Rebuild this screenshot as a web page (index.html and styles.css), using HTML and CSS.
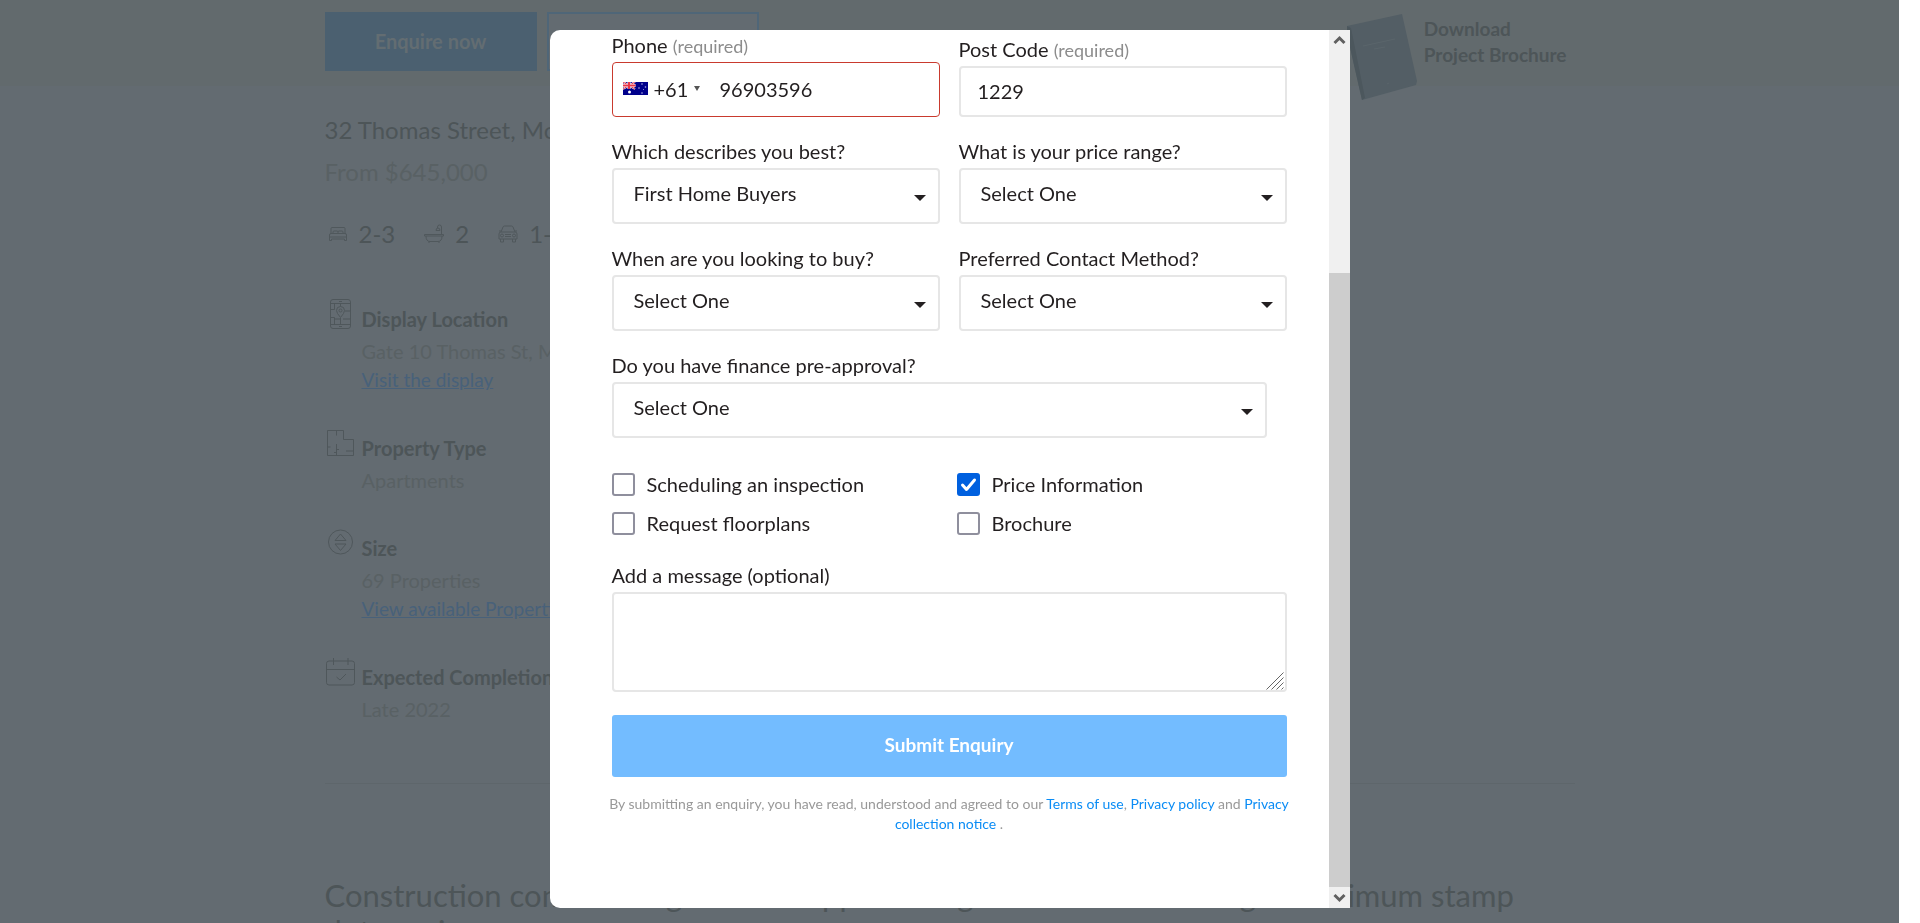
FILE: index.html
```html
<!DOCTYPE html>
<html lang="en">
<head>
<meta charset="utf-8">
<meta name="viewport" content="width=device-width, initial-scale=1">
<title>Project enquiry</title>
<link rel="stylesheet" href="styles.css">
</head>
<body>
<div class="page">
  <header class="topbar">
    <div class="container topbar-inner">
      <button class="btn btn-solid" type="button">Enquire now</button>
      <button class="btn btn-outline" type="button" aria-label="Call"></button>
      <a class="brochure" href="#brochure">
        <svg class="brochure-cover" viewBox="0 0 70 88" aria-hidden="true">
          <path d="M0 12 55 0 70 67 69 71 15 86 0 20Z" fill="#535e65"/>
          <path d="M0 12 4 14 18 84 15 86 0 20Z" fill="#4c575d"/>
          <path d="M16 32 48 25M27 35 38 33M40 70l2-1" stroke="#5a656b" fill="none"/>
        </svg>
        <span>Download<br>Project Brochure</span>
      </a>
    </div>
  </header>
  <main class="container">
    <p class="address">32 Thomas Street, Moonee Ponds</p>
    <p class="price">From $645,000</p>
    <ul class="stats">
      <li>
        <svg class="stat-icon" viewBox="0 0 20 20" aria-hidden="true"><path d="M3 10V4.500q0-1 1-1h12q1 0 1 1V10M1.500 16.500V11q0-1.500 1.500-1.500h14q1.500 0 1.500 1.500v5.500h-2V15h-13v1.500zM1.500 13h17M5 9.500V8q0-1 1-1h3q1 0 1 1v1.500M10 8q0-1 1-1h3q1 0 1 1v1.500"/></svg>
        <span>2-3</span>
      </li>
      <li>
        <svg class="stat-icon" viewBox="0 0 20 20" aria-hidden="true"><path d="M.5 10.500h19v1.500h-19zM2 12q0 5.500 4 5.500h8q4 0 4-5.500M5 17.500V19M15 17.500V19M17.500 10.500V3q0-2-2-2t-2 2v1M12 6.500q0-2.500 2-2.500t2 2.500z"/></svg>
        <span>2</span>
      </li>
      <li>
        <svg class="stat-icon" viewBox="0 0 20 20" aria-hidden="true"><path d="M3 8l2-5q.5-1 1.500-1h7q1 0 1.500 1l2 5M1 10q0-2 2-2h14q2 0 2 2v5H1zM1 7h2M17 7h2M2.500 15v3h3v-3M14.500 15v3h3v-3M7 10.500h6M7 12.500h6"/><circle cx="4" cy="11.500" r="1.500"/><circle cx="16" cy="11.500" r="1.500"/></svg>
        <span>1-2</span>
      </li>
    </ul>
    <dl class="facts">
      <div class="fact">
        <svg class="fact-icon" viewBox="0 0 30 30" aria-hidden="true"><rect x="4.500" y=".5" width="20" height="29" rx="2.500"/><path d="M4.500 4.500h20M4.500 25.500h20M13 2.500h3M13 27.500h3M14.500 4.500v3M14.500 19v6.500M8.500 4.500v6h-4M8.500 25.500v-7h-4M19 12h5.500M17 20h7.500M8.500 20h6M14.500 18.500q-4-4.500-4-7a4 4 0 0 1 8 0q0 2.500-4 7z"/><circle cx="14.500" cy="11.500" r="1.500"/></svg>
        <dt>Display Location</dt>
        <dd>Gate 10 Thomas St, Moonee Ponds</dd>
        <dd><a href="#display">Visit the display</a></dd>
      </div>
      <div class="fact">
        <svg class="fact-icon" viewBox="0 0 30 30" aria-hidden="true"><path d="M1.500 2.500h16v9h10v16h-26zM10.500 2.500v5M1.500 19h3M10.500 16v11.500M10.500 21.500h2.500M8 24.500h2.500M20 23h7.500"/></svg>
        <dt>Property Type</dt>
        <dd>Apartments</dd>
      </div>
      <div class="fact">
        <svg class="fact-icon" viewBox="0 0 30 30" aria-hidden="true"><circle cx="14.500" cy="14" r="12"/><path d="M14.500 6l5.500 6.500H9zM14.500 22.500l5.500-6.500H9z"/></svg>
        <dt>Size</dt>
        <dd>69 Properties</dd>
        <dd><a href="#properties">View available Properties</a></dd>
      </div>
      <div class="fact">
        <svg class="fact-icon" viewBox="0 0 30 30" aria-hidden="true"><rect x=".5" y="4" width="28" height="24" rx="2.500"/><path d="M.5 12.500h28M7.500 1v7M22 1v7M10.500 20l3.500 3 6-6"/></svg>
        <dt>Expected Completion</dt>
        <dd>Late 2022</dd>
      </div>
    </dl>
    <h2 class="headline">Construction commencing and fast approaching soon act in now to get maximum stamp duty savings</h2>
  </main>
</div>

<div class="overlay">
  <section class="modal" role="dialog" aria-label="Enquiry form">
    <form class="form">
      <div class="row">
        <div class="field">
          <label for="phone">Phone <small>(required)</small></label>
          <div class="phone">
            <button class="country" type="button" aria-label="Australia +61">
              <svg class="flag" viewBox="0 0 25 13" aria-hidden="true">
                <rect width="25" height="13" fill="#00008b"/>
                <path d="M0 0 12 7M12 0 0 7" stroke="#fff" stroke-width="2"/>
                <path d="M0 0 12 7M12 0 0 7" stroke="#e8384a"/>
                <path d="M6 0v7M0 3.500h12.500" stroke="#fff" stroke-width="3"/>
                <path d="M6 0v7M0 3.500h12.500" stroke="#e8384a" stroke-width="2"/>
                <circle cx="6.500" cy="10" r="1.500" fill="#fff"/>
                <g fill="#b9b9e6"><circle cx="19" cy="2" r=".8"/><circle cx="16" cy="6" r=".8"/><circle cx="22.500" cy="5" r=".8"/><circle cx="19" cy="11" r=".8"/><circle cx="20.500" cy="7.500" r=".5"/></g>
              </svg>
              <span>+61</span>
              <svg class="caret-small" viewBox="0 0 6 5" aria-hidden="true"><path d="M0 0h6L3 5z" fill="#555"/></svg>
            </button>
            <input id="phone" type="tel" value="96903596">
          </div>
        </div>
        <div class="field">
          <label for="postcode">Post Code <small>(required)</small></label>
          <input class="text" id="postcode" type="text" value="1229">
        </div>
      </div>
      <div class="row">
        <div class="field">
          <label for="describes">Which describes you best?</label>
          <div class="select"><select id="describes"><option>First Home Buyers</option></select><svg class="caret" viewBox="0 0 12 6" aria-hidden="true"><path d="M0 0h12L6 6z"/></svg></div>
        </div>
        <div class="field">
          <label for="range">What is your price range?</label>
          <div class="select"><select id="range"><option>Select One</option></select><svg class="caret" viewBox="0 0 12 6" aria-hidden="true"><path d="M0 0h12L6 6z"/></svg></div>
        </div>
      </div>
      <div class="row">
        <div class="field">
          <label for="when">When are you looking to buy?</label>
          <div class="select"><select id="when"><option>Select One</option></select><svg class="caret" viewBox="0 0 12 6" aria-hidden="true"><path d="M0 0h12L6 6z"/></svg></div>
        </div>
        <div class="field">
          <label for="contact">Preferred Contact Method?</label>
          <div class="select"><select id="contact"><option>Select One</option></select><svg class="caret" viewBox="0 0 12 6" aria-hidden="true"><path d="M0 0h12L6 6z"/></svg></div>
        </div>
      </div>
      <div class="field finance">
        <label for="finance">Do you have finance pre-approval?</label>
        <div class="select"><select id="finance"><option>Select One</option></select><svg class="caret" viewBox="0 0 12 6" aria-hidden="true"><path d="M0 0h12L6 6z"/></svg></div>
      </div>
      <div class="checks">
        <label class="check"><input type="checkbox"><span>Scheduling an inspection</span></label>
        <label class="check"><input type="checkbox" checked><svg class="tick" viewBox="0 0 23 23" aria-hidden="true"><path d="M5.500 12l4 4.500L17.500 7"/></svg><span>Price Information</span></label>
        <label class="check"><input type="checkbox"><span>Request floorplans</span></label>
        <label class="check"><input type="checkbox"><span>Brochure</span></label>
      </div>
      <div class="field message">
        <label for="message">Add a message (optional)</label>
        <div class="textarea">
          <textarea id="message"></textarea>
          <svg class="grip" viewBox="0 0 18 18" aria-hidden="true"><path d="M.5 17.500l17-17M5.500 17.500l12-12M10.500 17.500l7-7M15.500 17.500l2-2"/></svg>
        </div>
      </div>
      <button class="submit" type="submit">Submit Enquiry</button>
      <p class="terms">By submitting an enquiry, you have read, understood and agreed to our <a href="#terms">Terms of use</a>, <a href="#privacy">Privacy policy</a> and <a href="#collection">Privacy collection notice</a> .</p>
    </form>
    <div class="scrollbar" aria-hidden="true">
      <svg class="scroll-arrow" viewBox="0 0 21 21"><path d="M5.500 13l5-5 5 5"/></svg>
      <div class="track"><div class="thumb"></div></div>
      <svg class="scroll-arrow" viewBox="0 0 21 21"><path d="M5.500 8l5 5 5-5"/></svg>
    </div>
  </section>
</div>
</body>
</html>
```
FILE: styles.css
```css
*, *::before, *::after { box-sizing: border-box; }

body {
  margin: 0;
  height: 100vh;
  overflow: hidden;
  background: #fff;
  font-family: Lato, "Liberation Sans", sans-serif;
  font-size: 20px;
  line-height: 24px;
  color: #231f20;
}

button, input, select, textarea { font: inherit; color: inherit; }

/* Page under the dialog */
.page {
  height: 100vh;
  margin-right: 21px;
  overflow: hidden;
  background: #636b71;
  color: #4d5558;
}
.container { max-width: 1250px; margin: 0 auto; }
.topbar { height: 86px; background: #626a6d; }
.topbar-inner { display: flex; align-items: flex-start; gap: 10px; padding-top: 12px; }
.btn { width: 212px; height: 59px; border: 0; padding: 0 0 2px; font-weight: 700; }
.btn-solid { background: #4b6070; color: #636d72; }
.btn-outline { background: #636b71; border: 2px solid #4f6678; }
.brochure { display: flex; gap: 7px; margin: 2px 8px 0 auto; color: #4d5558; text-decoration: none; line-height: 26px; }
.brochure-cover { width: 70px; height: 88px; }
.brochure span { padding-top: 2px; font-size: 19px; font-weight: 700; }

.address, .price { margin: 0; font-size: 24px; line-height: 32px; }
.address { padding-top: 28px; }
.price { margin-top: 10px; color: #596164; }
.stats { display: flex; gap: 29px; margin: 30px 0 0; padding: 0 0 0 3px; list-style: none; font-size: 24px; line-height: 32px; }
.stats li { display: flex; align-items: center; gap: 11px; }
.stat-icon { width: 20px; height: 20px; fill: none; stroke: #50585c; }

.facts { display: grid; gap: 34px; margin: 49px 0 0; }
.fact { position: relative; padding-left: 37px; }
.fact dt { padding: 7px 0 5px; font-weight: 700; line-height: 26px; }
.fact dd { margin: 0; line-height: 28px; color: #596164; }
.fact a { font-size: 19px; color: #48617a; }
.fact-icon { position: absolute; left: 1px; top: 0; width: 30px; height: 30px; fill: none; stroke: #4f575b; }

.headline { margin: 60px 0 0; border-top: 1px solid #5e666b; padding-top: 93px; font-size: 31px; font-weight: 400; line-height: 36px; }

/* Dialog */
.overlay {
  position: fixed;
  inset: 0 21px 0 0;
  display: flex;
  justify-content: center;
  padding: 30px 0 15px;
}
.modal { display: flex; width: 100%; max-width: 800px; overflow: hidden; background: #fff; border-radius: 10px 0 0 10px; }
.form { flex: 1; min-width: 0; padding: 3px 42px 0 62px; }
.row { display: grid; grid-template-columns: repeat(2, minmax(0, 1fr)); align-items: end; gap: 19px; margin-bottom: 22px; }
.field { display: flex; flex-direction: column; gap: 5px; }
.field small { font-size: 18px; line-height: 20px; color: #8c8c8c; }

.phone { display: flex; align-items: center; height: 55px; border: 1px solid #c93a2e; border-radius: 4px; padding-bottom: 2px; }
.phone input { flex: 1; min-width: 0; border: 0; padding: 0; background: none; outline: 0; }
.country { display: flex; align-items: center; gap: 6px; width: 107px; border: 0; padding: 0 0 0 10px; background: none; }
.flag { width: 25px; height: 13px; }
.caret-small { width: 6px; height: 5px; }
.text { width: 100%; height: 51px; border: 2px solid #e6e6e6; border-radius: 4px; padding: 0 17px 2px; }

.select { position: relative; }
.select select {
  display: block;
  width: 100%;
  height: 56px;
  border: 2px solid #e6e6e6;
  border-radius: 4px;
  padding: 0 40px 6px 20px;
  background: #fff;
  appearance: none;
}
.caret { position: absolute; right: 14px; top: 27px; width: 12px; height: 6px; fill: #231f20; pointer-events: none; }
.finance { margin-right: 20px; }

.checks { display: grid; grid-template-columns: 1fr 1fr; gap: 16px 15px; margin-top: 35px; }
.check { position: relative; display: flex; align-items: center; gap: 12px; height: 23px; }
.check span { padding-bottom: 2px; }
.check input { width: 23px; height: 23px; margin: 0; border: 2px solid #8f8f9d; border-radius: 3px; background: #fff; appearance: none; }
.check input:checked { border-color: #0060df; background: #0060df; }
.tick { position: absolute; left: 0; top: 0; width: 23px; height: 23px; fill: none; stroke: #fff; stroke-width: 3; stroke-linecap: round; stroke-linejoin: round; }

.message { margin-top: 28px; }
.textarea { position: relative; }
.textarea textarea { display: block; width: 100%; height: 100px; border: 2px solid #e6e6e6; border-radius: 4px; padding: 12px 17px; resize: none; }
.grip { position: absolute; right: 3px; bottom: 2px; width: 18px; height: 18px; fill: none; stroke: #666; }

.submit { display: block; width: 100%; height: 62px; margin-top: 23px; border: 0; border-radius: 3px; padding: 0 0 2px; background: #73bcff; color: #fff; font-size: 19px; font-weight: 700; }
.terms { margin: 17px -6px 0; font-size: 14px; line-height: 20px; text-align: center; color: #999; }
.terms a { color: #0a8cf5; text-decoration: none; }

.scrollbar { display: flex; flex-direction: column; width: 21px; background: #f0f0f0; }
.scroll-arrow { width: 21px; height: 21px; fill: none; stroke: #606060; stroke-width: 3; }
.track { display: flex; flex: 1; flex-direction: column; justify-content: flex-end; }
.thumb { height: 73.5%; background: #cdcdcd; }
```
